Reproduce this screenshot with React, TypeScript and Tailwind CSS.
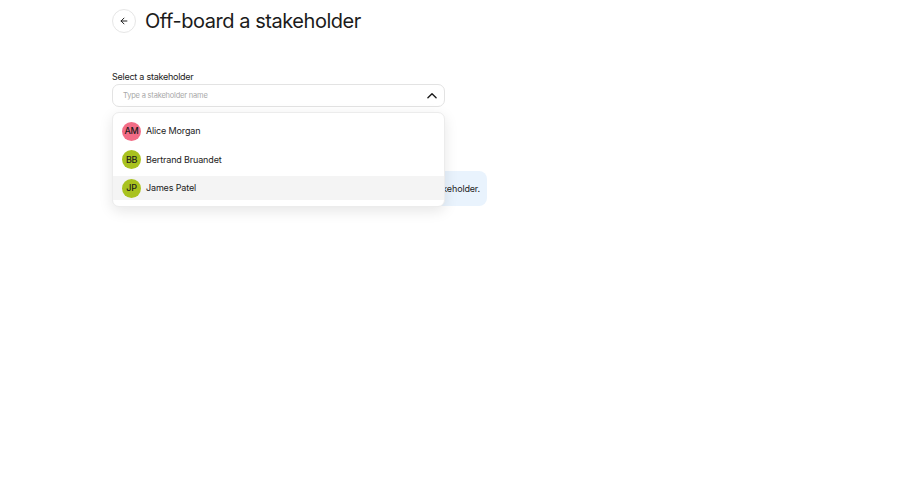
import React from 'react'

const people = [
  { initials: 'AM', name: 'Alice Morgan', color: 'bg-[#f26c86]' },
  { initials: 'BB', name: 'Bertrand Bruandet', color: 'bg-[#a9c21f]' },
  { initials: 'JP', name: 'James Patel', color: 'bg-[#a9c21f]' },
]

export default function App() {
  return (
    <div className="min-h-[484px] bg-white pl-[112px] pt-[9px] text-[#1b1b1b] [font-family:Inter,'Liberation_Sans',sans-serif]">
      {/* Header */}
      <div className="flex items-center gap-[9px]">
        <button className="flex h-6 w-6 items-center justify-center rounded-full border border-[#e6e6e6] bg-white">
          <svg width="10" height="10" viewBox="0 0 24 24" fill="none" stroke="#222" strokeWidth="2.4" strokeLinecap="round" strokeLinejoin="round">
            <path d="M19 12H5" />
            <path d="M12 19l-7-7 7-7" />
          </svg>
        </button>
        <h1 className="text-[20px] font-normal leading-6 tracking-[-0.45px]">Off-board a stakeholder</h1>
      </div>

      {/* Select */}
      <div className="mt-[38px] w-[333px]">
        <label className="block text-[9px] leading-[12px] tracking-[-0.25px] text-[#222]">Select a stakeholder</label>
        <div className="relative mt-[1px]">
          <div className="flex h-[23px] items-center justify-between rounded-[7px] border border-[#e3e3e3] bg-white pl-[10px] pr-[5px]">
            <span className="text-[7.5px] tracking-[-0.2px] text-[#a8a8a8]">Type a stakeholder name</span>
            <svg width="14" height="14" viewBox="0 0 24 24" fill="none" stroke="#1b1b1b" strokeWidth="2.4" strokeLinecap="round" strokeLinejoin="round">
              <path d="M5 15l7-7 7 7" />
            </svg>
          </div>

          {/* Dropdown */}
          <div className="absolute left-0 top-[28px] z-10 flex w-full flex-col gap-[4.5px] rounded-[7px] border border-[#ececec] bg-white py-[6px] shadow-[0_4px_14px_rgba(0,0,0,0.10)]">
            {people.map((p, i) => (
              <div key={p.initials} className={`flex h-[24px] items-center gap-[5px] pl-[9px] ${i === 2 ? 'bg-[#f4f4f4]' : ''}`}>
                <div className={`flex h-[19px] w-[19px] items-center justify-center rounded-full ${p.color} text-[9px] font-medium tracking-[-0.3px] text-[#1b1b1b]`}>
                  {p.initials}
                </div>
                <span className="text-[9px] tracking-[-0.15px] text-[#222]">{p.name}</span>
              </div>
            ))}
          </div>
        </div>
      </div>

      {/* Info box */}
      <div className="mt-[64px] flex h-[35px] w-[375px] items-center justify-end rounded-[8px] bg-[#e9f3fd] pr-[7px]">
        <span className="text-[9px] tracking-[-0.15px] text-[#222]">Off-boarding removes every access and role assigned to this stakeholder.</span>
      </div>
    </div>
  )
}
